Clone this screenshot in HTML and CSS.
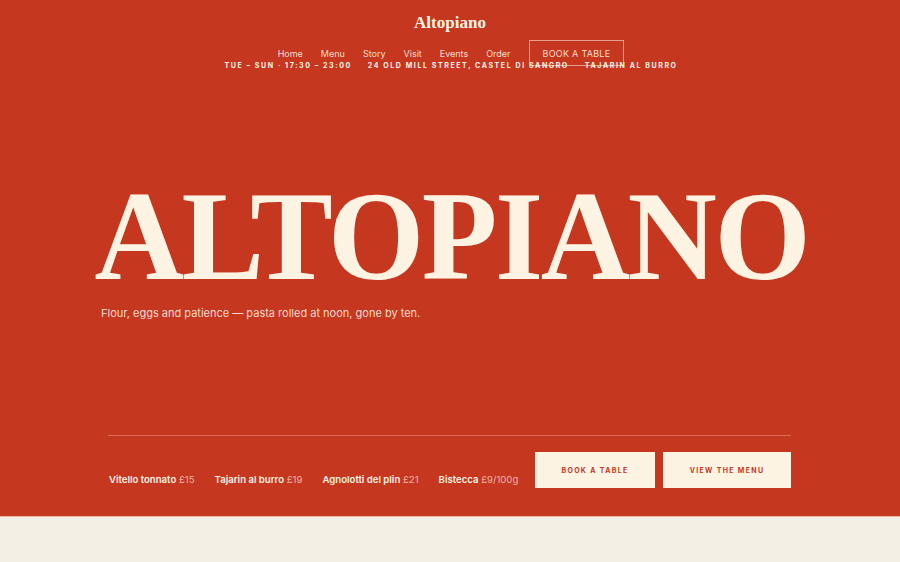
FILE: index.html
```html
<!DOCTYPE html>
<html lang="en">
<head>
<meta charset="utf-8">
<title>Altopiano</title>
<link rel="stylesheet" href="styles.css">
</head>
<body>
<section class="hero">
  <header class="masthead">
    <div class="logo">Altopiano</div>
    <nav class="nav">
      <a href="#">Home</a>
      <a href="#">Menu</a>
      <a href="#">Story</a>
      <a href="#">Visit</a>
      <a href="#">Events</a>
      <a href="#">Order</a>
      <a href="#" class="nav-cta">BOOK A TABLE</a>
    </nav>
    <div class="info">
      <span>TUE – SUN · 17:30 – 23:00</span>
      <span>24 OLD MILL STREET, CASTEL DI SANGRO</span>
      <span>TAJARIN AL BURRO</span>
    </div>
  </header>
  <div class="hero-body">
    <h1 class="title">ALTOPIANO</h1>
    <p class="tagline">Flour, eggs and patience — pasta rolled at noon, gone by ten.</p>
  </div>
  <div class="hero-foot">
    <ul class="dishes">
      <li><b>Vitello tonnato</b> £15</li>
      <li><b>Tajarin al burro</b> £19</li>
      <li><b>Agnolotti del plin</b> £21</li>
      <li><b>Bistecca</b> £9/100g</li>
    </ul>
    <div class="actions">
      <a href="#" class="btn btn-book">BOOK A TABLE</a>
      <a href="#" class="btn btn-menu">VIEW THE MENU</a>
    </div>
  </div>
</section>
<section class="below"></section>
</body>
</html>
```
FILE: styles.css
```css
* { box-sizing: border-box; }
html, body { margin: 0; padding: 0; }
body {
  background: #f4efe4;
  font-family: Inter, "Liberation Sans", sans-serif;
  color: #fdf3e3;
}
a { color: inherit; text-decoration: none; }

.hero {
  background: #c5371f;
  height: 517px;
  display: flex;
  flex-direction: column;
  border-bottom: 1px solid #e9b9a4;
}

.masthead {
  display: flex;
  flex-direction: column;
  align-items: center;
  padding-top: 12px;
}
.logo {
  font-family: "Liberation Serif", "DejaVu Serif", serif;
  font-weight: 700;
  font-size: 17px;
  line-height: 21px;
  color: #fdf3e3;
}
.nav {
  display: flex;
  align-items: center;
  gap: 18px;
  margin-top: 7px;
  padding-left: 2px;
  font-size: 9px;
  color: #f8dccf;
}
.nav a { padding-top: 1px; }
.nav-cta {
  border: 1px solid #e7a08e;
  padding: 0 13px;
  height: 26px;
  display: flex;
  align-items: center;
  letter-spacing: 0.03em;
}
.info {
  display: flex;
  gap: 16px;
  margin-top: -5px;
  padding-left: 2px;
  font-size: 7px;
  font-weight: 700;
  letter-spacing: 0.228em;
  line-height: 10px;
  color: #fdf3e3;
}

.hero-body {
  padding-top: 95px;
}
.title {
  margin: 0;
  text-align: center;
  font-family: "Liberation Serif", "DejaVu Serif", serif;
  font-weight: 700;
  font-size: 128px;
  line-height: 1.1;
  letter-spacing: -0.02em;
  color: #fdf3e3;
  transform: scaleX(0.967);
  padding-left: 3px;
}
.tagline {
  margin: 1px 0 0 101px;
  font-size: 11px;
  line-height: 11px;
  color: #f6d9cc;
}

.hero-foot {
  margin: auto 109px 28px 108px;
  border-top: 1px solid #db6b55;
  padding-top: 16px;
  display: flex;
  align-items: flex-end;
  justify-content: space-between;
}
.dishes {
  list-style: none;
  margin: 0;
  padding: 0 0 2px 1px;
  display: flex;
  gap: 20px;
  font-size: 9.6px;
  line-height: 12px;
  color: #efb4a3;
}
.dishes b { color: #fdf3e3; font-weight: 600; }
.actions {
  display: flex;
  gap: 8px;
}
.btn {
  height: 36px;
  display: flex;
  align-items: center;
  justify-content: center;
  background: #fdf3e3;
  color: #c5371f;
  font-size: 7px;
  font-weight: 700;
  letter-spacing: 0.19em;
}
.btn-book { width: 120px; }
.btn-menu { width: 128px; }

.below {
  height: 45px;
}
```
